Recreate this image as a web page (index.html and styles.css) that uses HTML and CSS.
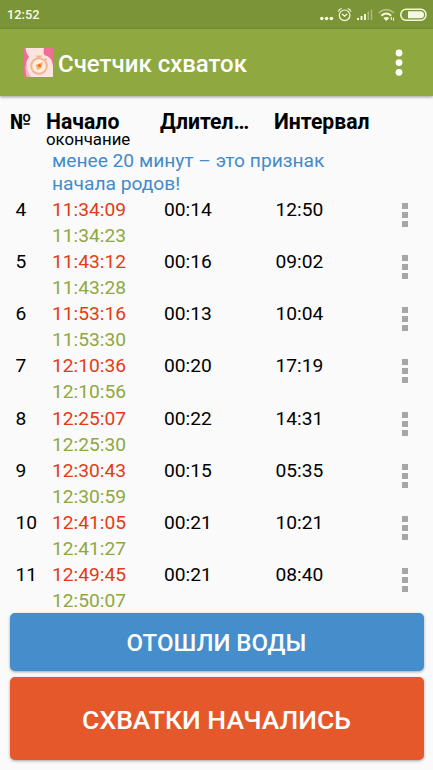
FILE: index.html
```html
<!DOCTYPE html>
<html lang="ru">
<head>
<meta charset="utf-8">
<title>Счетчик схваток</title>
<link rel="stylesheet" href="styles.css">
</head>
<body>
<div class="statusbar">
  <span class="clock">12:52</span>
  <svg class="status-icons" width="118" height="20" viewBox="0 0 118 20" fill="none" stroke="#f4fbdc">
    <g fill="#f4fbdc" stroke="none"><circle cx="6.8" cy="13.5" r="1.8"/><circle cx="11.6" cy="13.5" r="1.8"/><circle cx="16.4" cy="13.5" r="1.8"/></g>
    <circle cx="29.6" cy="10.3" r="5.3" stroke-width="1.2"/>
    <path d="M27 9l2.6 2.3L32.2 9M23.3 6.6q.7-2.4 3.2-3.1M35.9 6.6q-.7-2.4-3.2-3.1" stroke-width="1.2"/>
    <path d="M43 15v-2M46.500 15v-4M50 15V9" stroke-width="1.9"/>
    <path d="M53.300 15V6.500M56.500 15V4.500" stroke-width="1.5" opacity=".4"/>
    <path d="M63.700 7.800q7.600-6.500 15.200 0" stroke-width="1.6" opacity=".45"/>
    <path d="M66.400 10.700q4.900-4.300 9.800 0" stroke-width="2"/>
    <path d="M68.300 13.100q3-2.400 6 0l-3 2.800z" fill="#f4fbdc" stroke="none"/>
    <path d="M76.300 12v3M78.500 12.800v3" stroke-width="1.1"/>
    <rect x="85.800" y="4.300" width="25.200" height="11" rx="5.200" stroke-width="1.5"/>
    <path d="M93 6.300h12.500a3.500 3.500 0 0 1 0 7H93z" fill="#f4fbdc" stroke="none"/>
  </svg>
</div>
<header class="appbar">
  <svg class="logo" width="29" height="29" viewBox="0 0 29 29">
    <path fill="#fbe3e0" d="M0 0h29v29H0z"/>
    <path fill="#ee6f93" d="M0 0h1.500q.5 5 3.500 9Q1 14 2 24l1 5H0zM20 0h9v18q-1-8-6-10-5-1-3-8z"/>
    <path fill="#f7b1be" d="M3 13q-3 7 0 16h4Q2 22 3 13z"/>
    <circle cx="15" cy="18" r="7.800" fill="#fdeedd" stroke="#f2b48c" stroke-width="1.900"/>
    <path d="M12.500 8.500h5M15 8.500v2M21 10.500l1.500 1.500" stroke="#f2b48c" stroke-width="1.900"/>
    <path d="M11.500 17l7.500-3-1.500 6-4 2z" fill="#f7b267"/><circle cx="15.500" cy="17.500" r="1.600" fill="#ea6a3c"/>
  </svg>
  <h1>Счетчик схваток</h1>
  <svg class="menu" width="8" height="28" viewBox="0 0 8 28" fill="#fff"><circle cx="4" cy="4" r="3.400"/><circle cx="4" cy="13.600" r="3.400"/><circle cx="4" cy="23.300" r="3.400"/></svg>
</header>
<main>
  <div class="cols head"><span>№</span><span>Начало</span><span>Длител…</span><span>Интервал</span></div>
  <div class="sub">окончание</div>
  <p class="hint">менее 20 минут – это признак<br>начала родов!</p>
  <div class="list">
    <div class="cols row"><span>4</span><span class="times"><b>11:34:09</b><i>11:34:23</i></span><span>00:14</span><span>12:50</span><span class="dots"><u></u><u></u><u></u></span></div>
    <div class="cols row"><span>5</span><span class="times"><b>11:43:12</b><i>11:43:28</i></span><span>00:16</span><span>09:02</span><span class="dots"><u></u><u></u><u></u></span></div>
    <div class="cols row"><span>6</span><span class="times"><b>11:53:16</b><i>11:53:30</i></span><span>00:13</span><span>10:04</span><span class="dots"><u></u><u></u><u></u></span></div>
    <div class="cols row"><span>7</span><span class="times"><b>12:10:36</b><i>12:10:56</i></span><span>00:20</span><span>17:19</span><span class="dots"><u></u><u></u><u></u></span></div>
    <div class="cols row"><span>8</span><span class="times"><b>12:25:07</b><i>12:25:30</i></span><span>00:22</span><span>14:31</span><span class="dots"><u></u><u></u><u></u></span></div>
    <div class="cols row"><span>9</span><span class="times"><b>12:30:43</b><i>12:30:59</i></span><span>00:15</span><span>05:35</span><span class="dots"><u></u><u></u><u></u></span></div>
    <div class="cols row"><span>10</span><span class="times"><b>12:41:05</b><i>12:41:27</i></span><span>00:21</span><span>10:21</span><span class="dots"><u></u><u></u><u></u></span></div>
    <div class="cols row"><span>11</span><span class="times"><b>12:49:45</b><i>12:50:07</i></span><span>00:21</span><span>08:40</span><span class="dots"><u></u><u></u><u></u></span></div>
  </div>
</main>
<div class="actions">
  <button class="btn water">ОТОШЛИ ВОДЫ</button>
  <button class="btn start">СХВАТКИ НАЧАЛИСЬ</button>
</div>
</body>
</html>
```
FILE: styles.css
```css
* { box-sizing: border-box; }
body {
  margin: 0;
  height: 770px;
  overflow: hidden;
  display: flex;
  flex-direction: column;
  background: #fafafa;
  color: #000;
  font-family: Roboto, "Liberation Sans", sans-serif;
}
.statusbar {
  height: 29px;
  flex: none;
  display: flex;
  justify-content: space-between;
  background: #7c9438;
  color: #f8fde6;
}
.clock { padding-left: 7px; font-size: 12.8px; font-weight: 500; line-height: 30px; }
.status-icons { margin-top: 5px; }
.appbar {
  height: 67px;
  flex: none;
  display: flex;
  align-items: flex-start;
  background: #8fa83f;
  box-shadow: 0 1px 3px rgba(0, 0, 0, .4);
  color: #fff;
}
.logo { margin: 19px 0 0 24px; }
h1 { flex: 1; margin: 20px 0 0 5px; font-size: 24px; font-weight: 500; line-height: 30px; white-space: nowrap; }
.menu { margin: 20px 30px 0 0; }
main { height: 517px; flex: none; padding-top: 13px; }
.cols { display: grid; grid-template-columns: 36.500px 112px 111.500px 110.500px 1fr; padding-left: 15.500px; }
.head { grid-template-columns: 36px 114px 114px 1fr; padding-left: 10px; font-size: 21.2px; font-weight: 700; line-height: 26px; height: 23px; white-space: nowrap; }
.sub { padding-left: 46px; font-size: 16.800px; line-height: 14px; height: 14px; }
.hint { margin: 3px 0 0; padding-left: 52px; height: 48px; font-size: 19.200px; line-height: 23px; color: #448aca; white-space: nowrap; }
.row { height: 52.14px; font-size: 19.2px; line-height: 26px; }
.times { display: flex; flex-direction: column; }
.times b { font-weight: 400; color: #e23c16; }
.times i { font-style: normal; color: #8fa83f; }
.dots { display: flex; flex-direction: column; gap: 3px; padding: 6px 0 0 16px; }
.dots u { width: 6px; height: 6px; background: #a6a6a6; }
.actions { display: flex; flex-direction: column; gap: 6px; padding: 0 9.500px; }
.btn {
  border: 0;
  border-radius: 5px;
  padding: 2px 0 0;
  color: #fff;
  font-family: inherit;
  font-weight: 500;
  box-shadow: 0 1px 3px rgba(0, 0, 0, .35);
}
.water { height: 58px; background: #468dcb; font-size: 24px; }
.start { height: 83px; background: #e5582b; font-size: 26.500px; }
```
